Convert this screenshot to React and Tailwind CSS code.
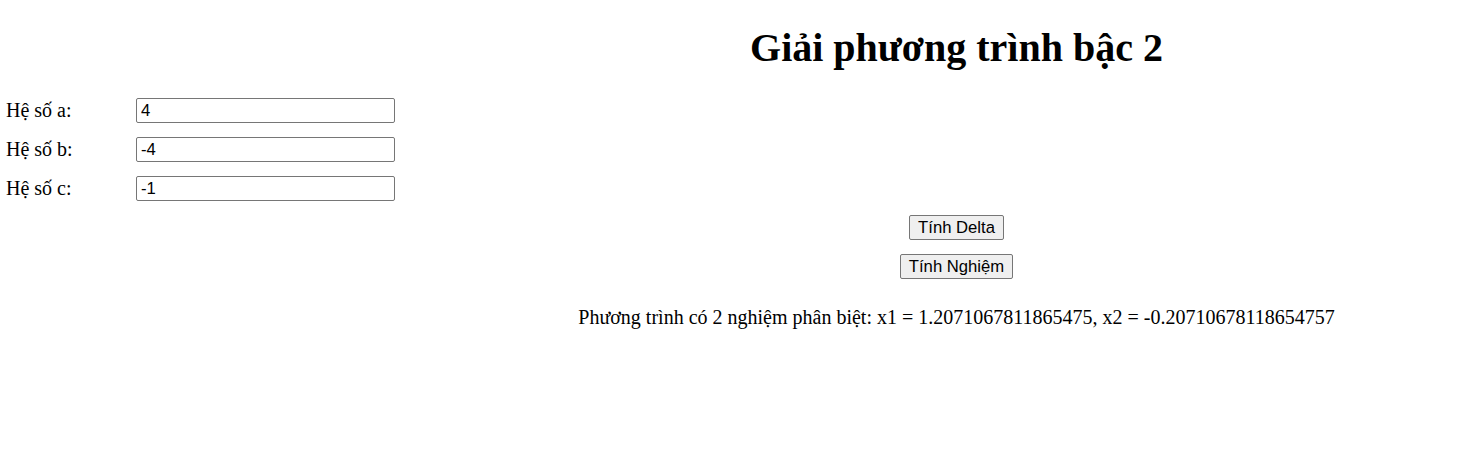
import React from "react";

function Row({ label, value }) {
  return (
    <div className="flex items-start h-[25px] mb-[14px]">
      <div className="w-[136px] pl-[6px] text-[20px] leading-[24px] text-black whitespace-nowrap">{label}</div>
      <input
        defaultValue={value}
        className="w-[259px] h-[25px] border border-[#767676] rounded-[2px] px-[4px] pt-[1px] text-[16.67px] text-black bg-white font-['Liberation_Sans',Arial,sans-serif] outline-none"
      />
    </div>
  );
}

function Btn({ children }) {
  return (
    <button className="h-[25px] px-[8px] pt-[2px] border border-[#767676] rounded-[2px] bg-[#efefef] text-[16.67px] text-black leading-none font-['Liberation_Sans',Arial,sans-serif]">
      {children}
    </button>
  );
}

export default function App() {
  return (
    <div className="w-[1483px] h-[473px] bg-white flex font-['Liberation_Serif','Times_New_Roman',serif]">
      <div className="w-[430px] pt-[98px] flex flex-col">
        <Row label="Hệ số a:" value="4" />
        <Row label="Hệ số b:" value="-4" />
        <Row label="Hệ số c:" value="-1" />
      </div>
      <div className="flex-1 flex flex-col items-center">
        <h1 className="mt-[25px] text-[40px] font-bold leading-[46px] text-black whitespace-nowrap">Giải phương trình bậc 2</h1>
        <div className="mt-[144px]"><Btn>Tính Delta</Btn></div>
        <div className="mt-[14px]"><Btn>Tính Nghiệm</Btn></div>
        <p className="mt-[27px] text-[20px] leading-[23px] text-black whitespace-nowrap">
          Phương trình có 2 nghiệm phân biệt: x1 = 1.2071067811865475, x2 = -0.20710678118654757
        </p>
      </div>
    </div>
  );
}
